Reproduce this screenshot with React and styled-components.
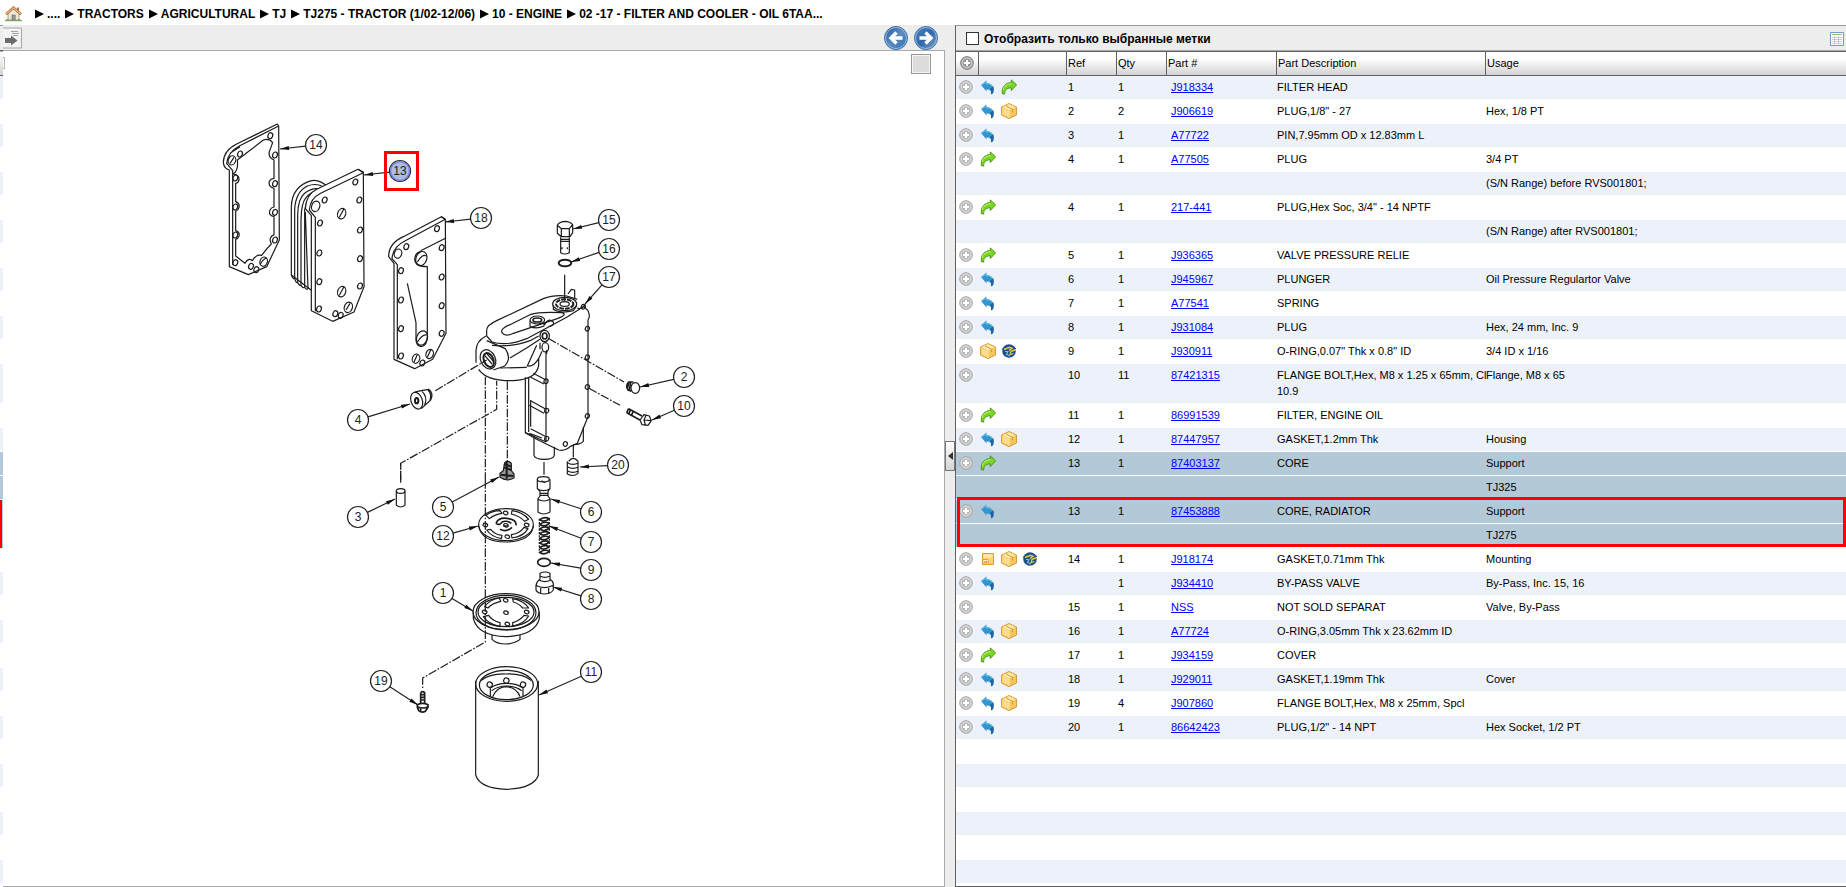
/* eslint-disable react/prop-types */
import React from 'react';
import styled, { createGlobalStyle } from 'styled-components';

const GlobalStyle = createGlobalStyle`
  * {
    box-sizing: border-box;
  }
  body {
    margin: 0;
    background: #fff;
    color: #000;
    font-family: 'Liberation Sans', Arial, sans-serif;
    font-size: 11px;
  }
  svg {
    display: block;
    flex: none;
  }
`;

const Page = styled.div`
  display: flex;
  flex-direction: column;
  height: 100vh;
  overflow: hidden;
`;

const Crumbs = styled.nav`
  display: flex;
  align-items: center;
  flex: none;
  height: 25px;
  padding: 2px 0 0 5px;
  gap: 5px;
`;

const HomeLink = styled.a`
  display: flex;
  margin-right: 8px;
`;

const Crumb = styled.a`
  display: flex;
  align-items: center;
  gap: 3px;
  color: #000;
  font-size: 12px;
  font-weight: bold;
  line-height: 16px;
  text-decoration: none;
  white-space: nowrap;
`;

const Workspace = styled.div`
  display: flex;
  flex: 1;
  min-height: 0;
  background: #ededed;
`;

const EdgeStrip = styled.div`
  flex: none;
  width: 3px;
  overflow: hidden;
  background: #fff;
`;

const EdgeHead = styled.div`
  height: 51px;
  border-top: 1px solid #9a9a9a;
  border-bottom: 1px solid #5f6061;
  background: linear-gradient(#ededed 24px, #5f6061 24px, #5f6061 25px, #fff 26px, #d2d2d2);
`;

const tones = {
  plain: '#fff',
  stripe: '#edf2fa',
  selected: '#b4c9d8',
};

const EdgeRow = styled.div`
  height: ${({ $tall }) => ($tall ? 40 : 24)}px;
  border-bottom: ${({ $marked }) => ($marked ? 0 : 1)}px solid #fff;
  background: ${({ $tone, $marked }) => ($marked
    ? `linear-gradient(90deg, #f00 2px, ${tones[$tone]} 2px)`
    : tones[$tone])};
`;

const DrawingPane = styled.section`
  display: flex;
  flex-direction: column;
  flex: 942 1 0;
  min-width: 0;
`;

const Toolbar = styled.div`
  display: flex;
  align-items: center;
  flex: none;
  height: 26px;
  padding-right: 7px;
  gap: 6px;
  border-bottom: 1px solid #a9a9a9;
`;

const Grow = styled.div`
  flex: 1;
`;

const IconButton = styled.button`
  display: flex;
  padding: 0;
  border: 0;
  background: none;
  cursor: pointer;
`;

const Canvas = styled.div`
  position: relative;
  flex: 1;
  min-height: 0;
  border: solid #a9a9a9;
  border-width: 0 1px 1px 0;
  background: #fff;
`;

const ViewButton = styled.button`
  position: absolute;
  top: 3px;
  right: 13px;
  width: 20px;
  height: 20px;
  border: 1px solid #999;
  box-shadow: inset 0 0 0 1px #f4f4f4;
  background: #dcdcdc;
`;

const EdgeTab = styled.span`
  position: absolute;
  top: 6px;
  left: 0;
  width: 2px;
  height: 12px;
  border: 1px solid #b4b4b4;
  border-left: 0;
`;

const Gutter = styled.div`
  display: flex;
  align-items: center;
  flex: none;
  width: 10px;
`;

const CollapseButton = styled.button`
  display: flex;
  align-items: center;
  justify-content: center;
  width: 10px;
  height: 30px;
  padding: 0;
  border: 1px solid #777;
  background: linear-gradient(#fff, #d4d4d4);
`;

const PartsPane = styled.section`
  display: flex;
  flex-direction: column;
  flex: 890 1 0;
  min-width: 0;
  border-top: 1px solid #9a9a9a;
  border-left: 1px solid #5f6061;
  border-bottom: 1px solid #5f6061;
`;

const FilterBar = styled.div`
  display: flex;
  align-items: center;
  justify-content: space-between;
  flex: none;
  height: 25px;
  padding: 1px 2px 0 10px;
  border-bottom: 1px solid #a9a9a9;
`;

const FilterLabel = styled.label`
  display: flex;
  align-items: center;
  gap: 5px;
  font-size: 12px;
  font-weight: bold;
`;

const Check = styled.input`
  appearance: none;
  width: 13px;
  height: 13px;
  margin: 0;
  border: 1px solid #333;
  background: #fff;
  &:checked {
    background: #3b73b9;
  }
`;

const TableArea = styled.div`
  flex: 1;
  min-height: 0;
  overflow: hidden;
  background: #fff;
`;

const Table = styled.table`
  width: 100%;
  table-layout: fixed;
  border-collapse: separate;
  border-spacing: 0;
`;

const Col = styled.col`
  width: ${({ $width }) => ($width ? `${$width}px` : 'auto')};
`;

const Th = styled.th`
  height: 25px;
  padding: 0 0 1px 1px;
  border: solid #5f6061;
  border-width: 1px 1px 1px 0;
  background: linear-gradient(#fff 30%, #d2d2d2);
  font-weight: normal;
  line-height: 16px;
  text-align: left;
  white-space: nowrap;
  &:first-child {
    padding-left: 4px;
  }
  &:last-child {
    border-right: 0;
  }
`;

const Block = styled.tbody`
  position: relative;
  ${({ $marked }) => $marked && `
    &::after {
      content: '';
      position: absolute;
      inset: -3px 0 1px 1px;
      border: 3px solid #f00;
      pointer-events: none;
    }
  `}
`;

const Row = styled.tr`
  height: 24px;
  background: ${({ $tone }) => tones[$tone]};
`;

const Td = styled.td`
  height: 24px;
  padding: 3px 0 4px ${({ $indent = 1 }) => $indent}px;
  border-bottom: 1px solid #fff;
  line-height: 16px;
  vertical-align: top;
  white-space: pre;
`;

const Icons = styled.div`
  display: flex;
  gap: 5px;
  height: 16px;
`;

const PartLink = styled.a`
  color: #00f;
  text-decoration: underline;
`;

const HomeIcon = () => (
  <svg width="17" height="16" viewBox="0 0 17 16">
    <path d="M3 7v7h11V7L8.500 2.500z" fill="#eee6d8" stroke="#9c8b74" strokeWidth=".8" />
    <path d="M12 1.500h2v4h-2z" fill="#b5764a" />
    <path d="M1 8.200 8.500 1.700 16 8.200" fill="none" stroke="#a8713c" strokeWidth="2.600" />
    <path d="M1.300 8 8.500 1.800 15.700 8" fill="none" stroke="#e8b878" strokeWidth="1.200" />
    <path d="M7 9h3.200v5H7z" fill="#9a9a9a" stroke="#666" strokeWidth=".6" />
    <path d="M.5 14.500q2-3 4 0zM12 14.500q2-3 4.500 0z" fill="#5fae3f" />
    <path d="M0 14.700h17" stroke="#6c9a50" strokeWidth="1" />
  </svg>
);

const Triangle = () => (
  <svg width="9" height="10" viewBox="0 0 9 10">
    <path d="M0 .5 9 5 0 9.500z" />
  </svg>
);

const SendIcon = () => (
  <svg width="19" height="22" viewBox="0 0 19 22">
    <path d="M0 1h18.500v20H0" fill="#f3f3f3" stroke="#a5a5a5" />
    <path d="M8 4.500h7M9 6.500h7M10 8.500h5" stroke="#999" strokeWidth=".9" />
    <path d="M2 11h6V8.500l6.500 5-6.500 5V16H2z" fill="#6c6c6c" />
  </svg>
);

const RoundArrow = ({ back }) => (
  <svg width="24" height="24" viewBox="0 0 24 24">
    <defs>
      <linearGradient id={back ? 'blueBack' : 'blueNext'} x1="0" y1="0" x2="1" y2="1">
        <stop offset="0" stopColor={back ? '#245a9c' : '#4f86c2'} />
        <stop offset=".5" stopColor={back ? '#5b8cc0' : '#2f67a8'} />
        <stop offset="1" stopColor={back ? '#2f6fb4' : '#8aa6c8'} />
      </linearGradient>
    </defs>
    <circle cx="12" cy="12" r="11.500" fill={`url(#${back ? 'blueBack' : 'blueNext'})`} stroke="#3f74ac" />
    <circle cx="12" cy="12" r="10.500" fill="none" stroke="#a9c6e2" strokeWidth=".8" />
    <path
      d={back ? 'M12.500 6.500 7 12l5.500 5.500M7.500 12h11' : 'M11.500 6.500 17 12l-5.500 5.500M16.500 12h-11'}
      fill="none"
      stroke="#fff"
      strokeWidth="3.400"
    />
  </svg>
);

const PlusIcon = ({ dark }) => (
  <svg width="14" height="16" viewBox="0 0 14 16">
    <circle cx="7" cy="8" r="6.300" fill={dark ? '#999' : '#bcbcbc'} stroke={dark ? '#777' : '#a9a9a9'} />
    <circle cx="7" cy="8" r="5" fill="none" stroke="#e8e8e8" strokeWidth=".9" />
    <path d="M7 5v6M4 8h6" stroke="#fff" strokeWidth="2" />
  </svg>
);

const UndoIcon = () => (
  <svg width="16" height="16" viewBox="0 0 16 16">
    <path d="M1 6 6.500 1.500v2.500c5.500 0 8 3.500 6.500 10l-2 1.500c.4-3.800-.8-5-4.500-5v2z" fill="#3295cf" />
    <path d="M13.200 7c.8 2 .6 4.800 0 7L11 15.500c.5-2.800.2-4.300-1-5.300z" fill="#1c5f9c" />
    <path d="M2 6 6.500 2.500V5c3 0 5 .8 6 3" fill="none" stroke="#7cc8ec" strokeWidth=".7" />
  </svg>
);

const RedoIcon = () => (
  <svg width="16" height="16" viewBox="0 0 16 16">
    <path
      d="M15.600 5.800 10.300.9v2.700C4.500 3.800.8 7.500 1.300 14.700l2.400.4c-.2-4 2-6.300 6.600-6.200v2.700z"
      fill="#79d51f"
      stroke="#3f9310"
      strokeWidth=".9"
      strokeLinejoin="round"
    />
    <path d="M10.500 4.800C6 5 3 7 2.500 11" fill="none" stroke="#c9f58c" strokeWidth="1" />
  </svg>
);

const BoxIcon = () => (
  <svg width="16" height="16" viewBox="0 0 16 16">
    <path d="M8 .5 15.500 4v8L8 15.700.5 12V4z" fill="#f7c658" stroke="#d08a24" strokeWidth=".8" />
    <path d="M8 1.200 14.500 4.200 8 7.600 1.500 4.200z" fill="#fdeab4" />
    <path d="M1.500 5 7.500 8v6.500l-6-3z" fill="#fbdc90" />
    <path d="M5 3 11.500 6.200v3" fill="none" stroke="#d9952c" strokeWidth="1" />
    <path d="M8 7.800V15" stroke="#fff1c4" strokeWidth=".8" />
  </svg>
);

const GlobeIcon = () => (
  <svg width="16" height="16" viewBox="0 0 16 16">
    <circle cx="8" cy="8" r="6.800" fill="#1d4f86" />
    <path d="M.5 6 5 3l3 1-4 4zM15.500 5.500 12 3l-1 4z" fill="#1d4f86" />
    <path d="M3 6.500 8.500 4.200 11 5.200 8 7.500M9.500 8.500 14.500 6.800" fill="none" stroke="#e7c650" strokeWidth="1.500" />
    <path d="M4 8.500h3l-1.500 3L9 13" fill="none" stroke="#7cc2cf" strokeWidth="1.200" />
    <path d="M10 8.500 9 11.500l3.500-1" fill="none" stroke="#e7c650" strokeWidth="1.200" />
  </svg>
);

const NoteIcon = () => (
  <svg width="16" height="16" viewBox="0 0 16 16">
    <path d="M2.500 2.500h11v11h-11z" fill="#fbd573" stroke="#e09a2d" />
    <path d="M3.500 3.500h9v3h-9z" fill="#fdeab0" />
    <path d="M2.500 8.500h5.500v5" fill="#fff" stroke="#e6a13a" />
    <path d="M4 12.500l2-2M4.500 10.300h2v2" fill="none" stroke="#e0861c" />
  </svg>
);

const GridIcon = () => (
  <svg width="14" height="14" viewBox="0 0 14 14">
    <path d="M.5.5h13v13H.5z" fill="#fff" stroke="#6d9bd1" />
    <path d="M2 2.500h10" stroke="#8cc26a" />
    <path d="M2 5.500h10M2 7.500h10M2 9.500h10M2 11.500h10M4.500 4v8.500M8.500 4v8.500" stroke="#a9c3e6" strokeWidth=".8" />
  </svg>
);

const icons = {
  undo: UndoIcon,
  redo: RedoIcon,
  box: BoxIcon,
  globe: GlobeIcon,
  note: NoteIcon,
};

const crumbs = [
  '....',
  'TRACTORS',
  'AGRICULTURAL',
  'TJ',
  'TJ275 - TRACTOR (1/02-12/06)',
  '10 - ENGINE',
  '02 -17 - FILTER AND COOLER - OIL 6TAA...',
];

const parts = [
  { ref: '1', qty: 1, part: 'J918334', name: 'FILTER HEAD', usage: [''], marks: ['undo', 'redo'] },
  { ref: '2', qty: 2, part: 'J906619', name: 'PLUG,1/8" - 27', usage: ['Hex, 1/8 PT'], marks: ['undo', 'box'] },
  { ref: '3', qty: 1, part: 'A77722', name: 'PIN,7.95mm OD x 12.83mm L', usage: [''], marks: ['undo'] },
  { ref: '4', qty: 1, part: 'A77505', name: 'PLUG', usage: ['3/4 PT', '(S/N Range) before RVS001801;'], marks: ['redo'] },
  { ref: '4', qty: 1, part: '217-441', name: 'PLUG,Hex Soc, 3/4" - 14 NPTF', usage: ['', '(S/N Range) after RVS001801;'], marks: ['redo'] },
  { ref: '5', qty: 1, part: 'J936365', name: 'VALVE PRESSURE RELIE', usage: [''], marks: ['redo'] },
  { ref: '6', qty: 1, part: 'J945967', name: 'PLUNGER', usage: ['Oil Pressure Regulartor Valve'], marks: ['undo'] },
  { ref: '7', qty: 1, part: 'A77541', name: 'SPRING', usage: [''], marks: ['undo'] },
  { ref: '8', qty: 1, part: 'J931084', name: 'PLUG', usage: ['Hex, 24 mm, Inc. 9'], marks: ['undo'] },
  { ref: '9', qty: 1, part: 'J930911', name: 'O-RING,0.07" Thk x 0.8" ID', usage: ['3/4 ID x 1/16'], marks: ['box', 'globe'] },
  { ref: '10', qty: 11, part: '87421315', name: 'FLANGE BOLT,Hex, M8 x 1.25 x 65mm, Cl\n10.9', usage: ['Flange, M8 x 65'], marks: [], tall: true },
  { ref: '11', qty: 1, part: '86991539', name: 'FILTER, ENGINE OIL', usage: [''], marks: ['redo'] },
  { ref: '12', qty: 1, part: '87447957', name: 'GASKET,1.2mm Thk', usage: ['Housing'], marks: ['undo', 'box'] },
  { ref: '13', qty: 1, part: '87403137', name: 'CORE', usage: ['Support', 'TJ325'], marks: ['redo'], selected: true },
  { ref: '13', qty: 1, part: '87453888', name: 'CORE, RADIATOR', usage: ['Support', 'TJ275'], marks: ['undo'], selected: true, marked: true },
  { ref: '14', qty: 1, part: 'J918174', name: 'GASKET,0.71mm Thk', usage: ['Mounting'], marks: ['note', 'box', 'globe'] },
  { ref: '', qty: 1, part: 'J934410', name: 'BY-PASS VALVE', usage: ['By-Pass, Inc. 15, 16'], marks: ['undo'] },
  { ref: '15', qty: 1, part: 'NSS', name: 'NOT SOLD SEPARAT', usage: ['Valve, By-Pass'], marks: [] },
  { ref: '16', qty: 1, part: 'A77724', name: 'O-RING,3.05mm Thk x 23.62mm ID', usage: [''], marks: ['undo', 'box'] },
  { ref: '17', qty: 1, part: 'J934159', name: 'COVER', usage: [''], marks: ['redo'] },
  { ref: '18', qty: 1, part: 'J929011', name: 'GASKET,1.19mm Thk', usage: ['Cover'], marks: ['undo', 'box'] },
  { ref: '19', qty: 4, part: 'J907860', name: 'FLANGE BOLT,Hex, M8 x 25mm, Spcl', usage: [''], marks: ['undo', 'box'] },
  { ref: '20', qty: 1, part: '86642423', name: 'PLUG,1/2" - 14 NPT', usage: ['Hex Socket, 1/2 PT'], marks: ['undo'] },
  ...Array.from({ length: 6 }, () => ({ empty: true, usage: [''] })),
];

// every usage line is a row of its own and keeps the striping going
let line = 0;
const blocks = parts.map((item) => ({
  ...item,
  lines: item.usage.map((usage) => {
    const tone = line % 2 ? 'plain' : 'stripe';
    line += 1;
    return { usage, tone: item.selected ? 'selected' : tone };
  }),
}));

// label, centre of the bubble, tip of the arrow
const callouts = [
  ['14', 316, 145, 280, 149],
  ['13', 400, 171, 364, 175],
  ['18', 481, 218, 445, 222],
  ['15', 609, 220, 573, 229],
  ['16', 609, 249, 571, 262],
  ['17', 609, 277, 585, 304],
  ['2', 684, 377, 640, 387],
  ['10', 684, 406, 652, 420],
  ['20', 618, 465, 580, 467],
  ['4', 358, 420, 410, 404],
  ['3', 358, 517, 395, 499],
  ['5', 443, 507, 499, 477],
  ['12', 443, 536, 478, 526],
  ['6', 591, 512, 551, 499],
  ['7', 591, 542, 549, 526],
  ['9', 591, 570, 551, 563],
  ['8', 591, 599, 553, 587],
  ['1', 443, 593, 473, 611],
  ['11', 591, 672, 539, 695],
  ['19', 381, 681, 418, 705],
];

const Callout = ({ label, x, y, tipX, tipY }) => {
  const length = Math.hypot(tipX - x, tipY - y);
  const ux = (tipX - x) / length;
  const uy = (tipY - y) / length;
  const baseX = tipX - ux * 9;
  const baseY = tipY - uy * 9;
  return (
    <g>
      <path d={`M${x + ux * 10.5} ${y + uy * 10.5}L${tipX} ${tipY}`} stroke="#222" strokeWidth="1.200" />
      <path
        d={`M${tipX} ${tipY}L${baseX - uy * 2} ${baseY + ux * 2}L${baseX + uy * 2} ${baseY - ux * 2}z`}
        fill="#111"
      />
      <circle cx={x} cy={y} r="10.500" fill="#fff" stroke="#222" strokeWidth="1.200" />
      {label === '13' && <circle cx={x} cy={y} r="9.500" fill="#aabfdc" stroke="#7a7ae0" strokeWidth="1.500" />}
      <text x={x} y={y + 4} textAnchor="middle" fontSize="12" fontFamily="'Liberation Sans Narrow', 'Liberation Sans', sans-serif" fill="#222">
        {label}
      </text>
    </g>
  );
};

const Holes = ({ at, rx = 7, ry = 9 }) => at.map(([x, y]) => (
  <ellipse key={`${x}-${y}`} cx={x} cy={y} rx={rx} ry={ry} transform={`rotate(20 ${x} ${y})`} />
));

const Plates = () => (
  <g transform="translate(200 100) scale(.33333)">
    <path d="M232 72 110 132Q70 152 70 188 72 206 88 210L88 500 145 524 200 500 238 420 236 78z" />
    <path d="M236 78 118 138Q84 156 80 190L98 212V494M120 140 90 160" />
    <path d="M190 120 112 180Q116 210 100 222 118 226 117 238 116 248 107 250V305Q120 310 117 322 114 332 107 334V392Q120 396 117 408 114 416 107 418V468L135 490Q145 472 157 482 168 462 185 466 205 440 214 432 204 412 222 404V350Q204 346 210 330 214 322 222 321V265Q204 260 208 244 212 236 222 235V180Q204 172 208 155L218 128Q208 114 190 120z" />
    <Holes at={[[211, 107], [120, 162], [225, 165], [225, 251], [225, 337], [225, 420], [106, 234], [106, 321], [106, 405], [106, 488], [153, 499], [169, 509]]} />
    <Holes at={[[96, 181], [191, 485]]} rx={11} ry={14} />
    <path d="M90 190 102 172M180 494Q190 476 200 474" />

    <path d="M384 262Q360 238 335 242 276 258 274 320V525L336 572" />
    <path d="M378 266Q352 246 322 258 286 276 284 330V535M372 270Q340 258 314 280 294 296 293 345V548M366 272Q334 270 316 296 304 310 303 360V556M352 274Q322 290 314 330V562M316 336 324 566M274 525Q280 540 284 535 288 550 293 548 300 560 303 556 308 566 314 562 318 570 324 566" />
    <path d="M474 208 350 268Q318 284 316 326L334 346V632L398 664 462 636 492 560 490 216z" fill="#fff" />
    <path d="M490 218 362 280Q330 296 328 330L346 352V634M474 208 490 218" />
    <Holes at={[[466, 246], [374, 300], [478, 300], [480, 390], [480, 476], [480, 558], [360, 369], [358, 459], [358, 545], [357, 627], [406, 641], [422, 646]]} />
    <Holes at={[[347, 319], [425, 341], [425, 575], [445, 622]]} rx={12} ry={16} />
    <path d="M418 352 432 326M418 586 432 560M438 630 450 610" />

    <path d="M724 350 610 410Q566 430 566 470L582 490V778L644 806 698 778 738 700 736 358z" />
    <path d="M736 358 620 420Q578 440 576 476L592 494V778M724 350 736 358M738 414 662 452" />
    <path d="M662 454Q644 460 644 478 646 500 682 500V700Q684 736 664 740 646 738 648 712V668L622 550" />
    <Holes at={[[711, 386], [619, 440], [725, 443], [725, 531], [725, 617], [725, 700], [603, 512], [603, 600], [603, 686], [603, 768], [667, 789]]} />
    <Holes at={[[594, 461], [648, 776], [689, 762]]} rx={11} ry={14} />
    <Holes at={[[664, 476], [666, 714]]} rx={16} ry={22} />
    <path d="M652 486Q668 460 678 468M652 726Q670 700 680 706M642 786 652 764M682 772 692 750" />
  </g>
);

const Housing = () => (
  <g transform="translate(340 280) scale(.33333)">
    <path d="M582 474V526Q586 538 612 538 640 538 643 526V500M730 440V484Q720 494 700 494" />
    <path d="M556 292V458L590 478 656 510Q676 514 690 500L712 490 744 410V120Q752 108 744 92L730 78" />
    <path d="M566 292V456M572 360V440M618 214V486M556 458 618 486" />
    <path d="M580 280 618 300M572 292 612 312M572 362 618 388M568 376 612 400M572 446 618 470M568 460 606 474" />
    <Holes at={[[618, 304], [620, 392], [620, 476], [742, 146], [742, 232], [742, 321], [742, 408], [676, 492], [730, 80]]} rx={6} ry={7} />
    <path d="M440 168V150Q440 136 470 122L610 56Q640 44 680 48L712 58M440 168 456 186Q500 200 560 176L680 112 730 80M456 196Q520 202 570 182L596 168" />
    <path d="M486 158Q480 146 510 134L570 104Q600 94 666 98 684 104 652 116L520 160Q496 172 486 158z" />
    <ellipse cx="674" cy="72" rx="36" ry="20" />
    <ellipse cx="674" cy="72" rx="26" ry="14" strokeWidth="6" strokeDasharray="14 3" />
    <ellipse cx="674" cy="72" rx="14" ry="7" />
    <path d="M640 76V88Q660 102 700 92L710 78M684 42 694 28 704 30V54M712 84Q724 90 736 74" />
    <ellipse cx="592" cy="120" rx="22" ry="12" />
    <ellipse cx="592" cy="120" rx="13" ry="6" strokeWidth="5" />
    <path d="M570 122V140Q590 148 612 138V126M614 134Q624 112 640 126 644 138 626 140" />
    <path d="M438 168Q408 184 408 212V248M416 268Q440 304 520 302 590 298 596 256V236M440 182 496 206Q516 236 494 258L460 270" />
    <ellipse cx="444" cy="238" rx="22" ry="30" transform="rotate(-25 444 238)" />
    <ellipse cx="446" cy="240" rx="14" ry="22" transform="rotate(-25 446 240)" strokeWidth="6" />
    <path d="M434 226 456 252M440 220 460 244M510 234 560 204 600 178M590 196 562 258Q580 262 596 236L606 214M480 264 560 262" />
    <ellipse cx="614" cy="168" rx="14" ry="17" />
    <ellipse cx="614" cy="168" rx="7" ry="9" strokeWidth="5" />
    <ellipse cx="616" cy="202" rx="10" ry="14" />
    <path d="M620 210V222M600 188V208" />

    <ellipse cx="230" cy="362" rx="17" ry="26" transform="rotate(-20 230 362)" />
    <ellipse cx="230" cy="362" rx="5" ry="8" strokeWidth="6" />
    <path d="M224 336Q250 330 266 328 282 340 272 360L244 386M246 334Q264 350 254 376M264 330Q276 342 270 360" />

    <path d="M286 332 440 240M182 600V550L470 388V302M436 290V600M502 304V546" strokeDasharray="26 5 5 5" />
    <path d="M612 546V584M700 496V532M674 -16V62" />

    <path d="M494 548Q504 540 514 550V572L522 582V594Q500 606 480 592V580L490 572z" fill="#999" />
    <path d="M492 552 514 560M492 562 514 570M482 584 520 588M500 546V596" strokeWidth="6" />
    <path d="M686 544Q700 526 714 544V580Q700 592 682 582V544M682 548Q698 558 716 548M682 560Q698 570 716 560M682 572Q698 582 716 572" />
  </g>
);

const Bolts = () => (
  <g transform="translate(440 190) scale(.33333)">
    <path d="M352 106V130L364 140H390L398 128V104Q390 94 374 94 356 96 352 106zM352 106 364 116H388L398 104M364 116V140M388 116V140" />
    <path d="M362 142V188Q374 196 388 188V142M362 148H388M362 154H388M366 172V178M382 172V178" />
    <ellipse cx="375" cy="219" rx="19" ry="10" strokeWidth="6" />
    <path d="M447 595 540 646M325 445 552 576" strokeDasharray="26 5 5 5" />
    <ellipse cx="586" cy="594" rx="13" ry="16" />
    <path d="M580 576 566 576Q556 586 564 600L574 604M566 578 562 598M572 576 568 602" strokeWidth="5" />
    <path d="M566 656 606 678M560 668 600 690M566 656 560 668M572 658 566 672M580 664 574 676" strokeWidth="5" />
    <path d="M612 674 628 678 634 692 624 706 606 704 600 690zM618 676 612 690 616 704M612 690 632 692" />
  </g>
);

const FilterStack = () => (
  <g transform="translate(340 440) scale(.33333)">
    <path d="M436 120V606L248 714V748M182 128V70" strokeDasharray="26 5 5 5" />
    <path d="M169 154V196Q182 206 195 196V154" />
    <ellipse cx="182" cy="153" rx="13" ry="7" />

    <ellipse cx="498" cy="254" rx="82" ry="48" />
    <path d="M416 258Q424 306 498 306 574 304 580 258" />
    <path d="M438 226Q456 212 480 212L486 220Q462 224 448 236zM516 212Q548 216 566 238L554 244Q540 228 514 222zM440 270Q454 290 484 296L486 286Q464 284 452 268zM516 294Q550 290 564 266L552 262Q540 280 514 284z" />
    <path d="M468 250Q476 230 506 236 530 240 528 256M468 250Q480 258 486 246 500 240 514 250M480 268Q500 278 516 262M490 258 504 258" strokeWidth="5" />
    <Holes at={[[497, 219], [560, 255], [502, 290], [436, 255], [498, 256]]} rx={7} ry={5} />

    <ellipse cx="498" cy="515" rx="99" ry="54" />
    <ellipse cx="498" cy="516" rx="84" ry="44" />
    <ellipse cx="498" cy="518" rx="90" ry="52" />
    <path d="M400 515V536Q414 588 498 590 586 586 598 536V515M456 586V598Q470 612 498 612 526 610 540 598V586" />
    <path d="M434 500Q450 478 478 474L482 484Q456 490 444 504zM518 476Q552 482 566 504L548 504Q536 490 520 486zM430 530Q444 552 480 560L480 548Q456 542 446 526zM518 558Q552 552 566 528L552 526Q540 542 518 548z" />
    <Holes at={[[497, 481], [560, 516], [502, 552], [434, 516], [498, 518]]} rx={7} ry={5} />

    <ellipse cx="610" cy="118" rx="18" ry="8" />
    <path d="M592 118V146L600 154V168L594 176V216Q610 228 630 216V176L624 168V154L630 146V118M592 146Q610 158 630 146M600 160H624M600 166H624M594 178Q612 188 630 178M604 122 616 128" />
    {[240, 254, 268, 282, 296, 310, 324, 338].map((y) => (
      <path key={y} d={`M598 ${y - 2}Q612 ${y + 10} 628 ${y - 4}Q612 ${y - 12} 598 ${y}`} strokeWidth="5" />
    ))}
    <path d="M598 236V340M628 236V340" strokeDasharray="6 4" />
    <ellipse cx="612" cy="367" rx="19" ry="12" strokeWidth="5" />
    <path d="M600 400Q614 392 630 400V418Q640 424 640 432V450Q632 462 612 462 592 460 588 450V436Q590 424 600 418zM600 408Q614 416 630 408M598 420Q614 430 632 420M588 436Q612 450 640 436M602 444V460M626 444V460" />

    <path d="M407 722V1005Q420 1046 500 1048 584 1044 595 1005V722" />
    <ellipse cx="500" cy="732" rx="93" ry="52" />
    <ellipse cx="499" cy="735" rx="81" ry="44" />
    <path d="M451 768V744Q470 730 499 730 530 730 549 744V768M455 752Q474 738 499 738 528 738 545 752" />
    <path d="M458 770Q470 742 498 740 530 742 540 770M422 722Q450 700 498 702 550 700 574 722" />
    <Holes at={[[449, 734], [499, 722], [549, 734]]} rx={8} ry={8} />

    <path d="M242 758Q248 752 254 758V792M242 758V792M242 764H254M242 772H254M242 780H254M232 794Q248 786 264 794V802L256 814Q246 820 236 812L232 802zM232 800Q248 808 264 800M242 804V816" strokeWidth="5" />
  </g>
);

const Drawing = styled.svg`
  width: 100%;
  height: 100%;
`;

const Diagram = () => (
  <Drawing viewBox="3 51 941 835" preserveAspectRatio="xMinYMin meet" role="img" aria-label="Filter and cooler">
    <g fill="none" stroke="#1c1c1c" strokeWidth="3.600" strokeLinejoin="round">
      <Plates />
      <Housing />
      <Bolts />
      <FilterStack />
    </g>
    {callouts.map(([label, x, y, tipX, tipY]) => (
      <Callout key={label} label={label} x={x} y={y} tipX={tipX} tipY={tipY} />
    ))}
    <rect x="385.500" y="152.500" width="32" height="37" fill="none" stroke="#f00" strokeWidth="3" />
  </Drawing>
);

const PartRows = ({ item }) => (
  <Block $marked={item.marked}>
    {item.lines.map(({ usage, tone }, i) => {
      const first = i === 0 && !item.empty;
      return (
        <Row key={usage} $tone={tone}>
          <Td $indent={3}>{first && <PlusIcon />}</Td>
          <Td>
            <Icons>
              {first && item.marks.map((mark) => {
                const Icon = icons[mark];
                return <Icon key={mark} />;
              })}
            </Icons>
          </Td>
          <Td>{first && item.ref}</Td>
          <Td>{first && item.qty}</Td>
          <Td $indent={4}>{first && <PartLink href="#part">{item.part}</PartLink>}</Td>
          <Td $indent={0}>{first && item.name}</Td>
          <Td $indent={0}>{usage}</Td>
        </Row>
      );
    })}
  </Block>
);

const App = () => (
  <Page>
    <GlobalStyle />
    <Crumbs>
      <HomeLink href="#home" aria-label="Home"><HomeIcon /></HomeLink>
      {crumbs.map((crumb) => (
        <Crumb key={crumb} href="#crumb">
          <Triangle />
          {crumb}
        </Crumb>
      ))}
    </Crumbs>
    <Workspace>
      <EdgeStrip>
        <EdgeHead />
        {blocks.map((item, i) => item.lines.map(({ usage, tone }) => (
          <EdgeRow key={`${i}-${usage}`} $tone={tone} $tall={item.tall} $marked={item.marked} />
        )))}
      </EdgeStrip>
      <DrawingPane>
        <Toolbar>
          <IconButton aria-label="Send"><SendIcon /></IconButton>
          <Grow />
          <IconButton aria-label="Previous"><RoundArrow back /></IconButton>
          <IconButton aria-label="Next"><RoundArrow /></IconButton>
        </Toolbar>
        <Canvas>
          <Diagram />
          <EdgeTab />
          <ViewButton aria-label="View" />
        </Canvas>
      </DrawingPane>
      <Gutter>
        <CollapseButton aria-label="Collapse">
          <svg width="5" height="8" viewBox="0 0 5 8"><path d="M5 0v8L0 4z" fill="#333" /></svg>
        </CollapseButton>
      </Gutter>
      <PartsPane>
        <FilterBar>
          <FilterLabel>
            <Check type="checkbox" />
            Отобразить только выбранные метки
          </FilterLabel>
          <IconButton aria-label="Columns"><GridIcon /></IconButton>
        </FilterBar>
        <TableArea>
          <Table>
            <colgroup>
              <Col $width={23} />
              <Col $width={88} />
              <Col $width={50} />
              <Col $width={50} />
              <Col $width={110} />
              <Col $width={209} />
              <Col />
            </colgroup>
            <thead>
              <tr>
                <Th><PlusIcon dark /></Th>
                <Th aria-label="Marks" />
                <Th>Ref</Th>
                <Th>Qty</Th>
                <Th>Part #</Th>
                <Th>Part Description</Th>
                <Th>Usage</Th>
              </tr>
            </thead>
            {blocks.map((item, i) => <PartRows key={i} item={item} />)}
          </Table>
        </TableArea>
      </PartsPane>
    </Workspace>
  </Page>
);

export default App;
